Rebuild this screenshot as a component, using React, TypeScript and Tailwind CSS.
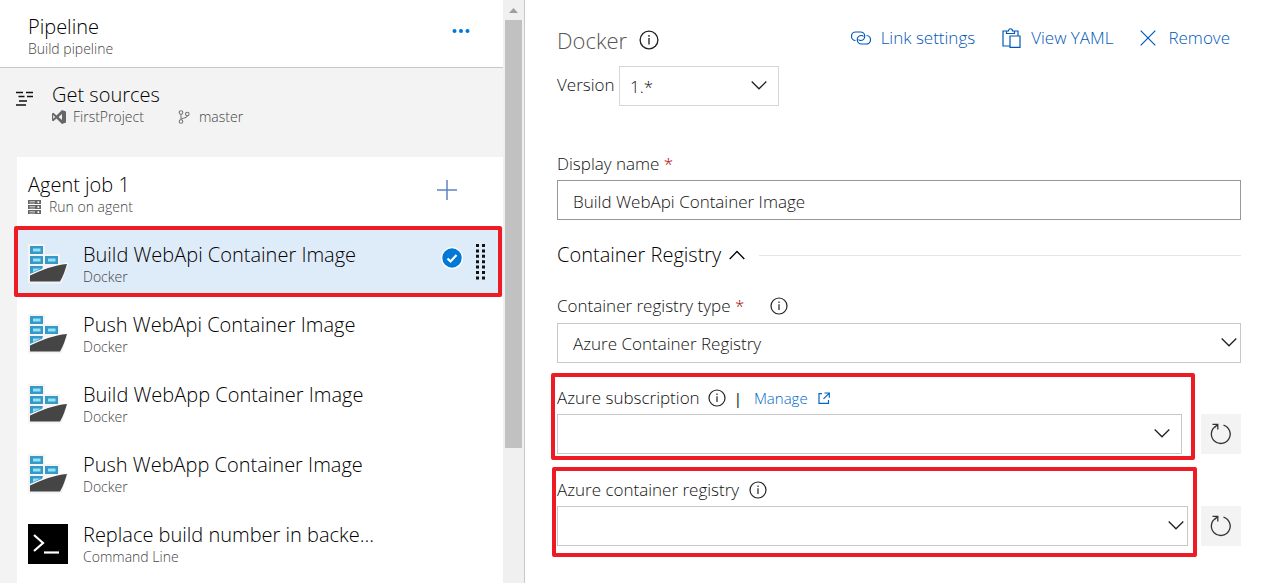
import { useState, type ReactNode } from 'react';

const FONT = "font-['Open_Sans','Noto_Sans',sans-serif] font-light";

function DockerIcon() {
  return (
    <svg viewBox="0 0 40 40" className="size-10 shrink-0" aria-hidden="true">
      <path d="M0 0h17v10h15v10h7.500l-1 5-5 14.500H0z" fill="#f4f4f4" />
      <g fill="#3999c6">
        <path d="M2 2h13v8H2zM2 12h13v8H2zM17 12h13v8H17zM2 22h13l-1 3-12 5z" />
      </g>
      <g fill="#8fe3fb">
        <path d="M5 4.500h7.500v3H5zM5 14.500h7.500v3H5zM20 14.500h7.500v3H20zM5 24.500h8l-8 3.500z" />
      </g>
      <path d="M0 31.500C12 25 26 20 40 18.500v3L2 32z" fill="#fafafa" />
      <path d="M2 31.500C14 26 26 21 39 20c-2 6-3.500 12-7 17.500H2z" fill="#454545" />
    </svg>
  );
}

function CommandIcon() {
  return (
    <svg viewBox="0 0 40 40" className="size-10 shrink-0" aria-hidden="true">
      <path d="M0 0h40v40H0z" fill="#000" />
      <path d="M6 11l9 8-9 8" fill="none" stroke="#fff" strokeWidth="2.2" />
      <path d="M16 28.500h15" stroke="#fff" strokeWidth="2.2" />
    </svg>
  );
}

function Chevron({ className = '', up = false }: { className?: string; up?: boolean }) {
  return (
    <svg viewBox="0 0 16 10" className={`h-[10px] w-4 ${className}`} fill="none" stroke="currentColor" strokeWidth="1.3" aria-hidden="true">
      <path d={up ? 'M.7 9L8 1.500 15.300 9' : 'M.7 1.500L8 8.800 15.300 1.500'} />
    </svg>
  );
}

function Info({ label, large = false }: { label: string; large?: boolean }) {
  return (
    <button type="button" aria-label={label} className="shrink-0 text-[#222]">
      <svg viewBox="0 0 18 18" className={large ? 'size-5' : 'size-[18px]'} fill="none" stroke="currentColor" strokeWidth="1.2" aria-hidden="true">
        <circle cx="9" cy="9" r="8" />
        <path d="M9 7.300V13M9 4.600v1.500" />
      </svg>
    </button>
  );
}

function Highlight({ className }: { className: string }) {
  return <div className={`pointer-events-none absolute rounded-[2px] border-4 border-[#ed1c24] ${className}`} />;
}

function Picker({ id, options, className, chevron }: { id: string; options: string[]; className: string; chevron: string }) {
  return (
    <div className="relative">
      <select id={id} className={`block h-10 w-full appearance-none border bg-white pt-[2px] pr-8 text-[17px] text-[#111] outline-none ${className}`}>
        {options.map((o) => (
          <option key={o}>{o}</option>
        ))}
      </select>
      <Chevron className={`pointer-events-none absolute top-[14px] text-[#222] ${chevron}`} />
    </div>
  );
}

function Refresh({ label }: { label: string }) {
  return (
    <button type="button" aria-label={label} className="flex size-10 shrink-0 items-center justify-center bg-[#f3f3f3] text-[#333]">
      <svg viewBox="0 0 22 22" className="size-[22px]" fill="none" stroke="currentColor" strokeWidth="1.3" aria-hidden="true">
        <path d="M13.500 2.100A9.400 9.400 0 1 1 6 3" />
        <path d="M2.500 1.300h5.300V6.500M7.600 1.500L4.800 4.400" />
      </svg>
    </button>
  );
}

function Action({ icon, children }: { icon: ReactNode; children: ReactNode }) {
  return (
    <button type="button" className="flex items-center whitespace-nowrap text-[17px] leading-7 text-[#0058b8]">
      {icon}
      {children}
    </button>
  );
}

const tasks = [
  { name: 'Build WebApi Container Image', kind: 'Docker' },
  { name: 'Push WebApi Container Image', kind: 'Docker' },
  { name: 'Build WebApp Container Image', kind: 'Docker' },
  { name: 'Push WebApp Container Image', kind: 'Docker' },
  { name: 'Replace build number in backe...', kind: 'Command Line' },
];

function Sidebar() {
  return (
    <aside className="flex w-[525px] shrink-0 border-r border-[#c8c8c8]">
      <div className="flex min-w-0 flex-1 flex-col bg-[#f3f3f3]">
        <header className="flex items-start justify-between border-b border-[#c8c8c8] bg-white pt-[15px] pr-[33px] pb-2 pl-7">
          <div>
            <h1 className="text-[20px] leading-6 text-black">Pipeline</h1>
            <p className="text-[14px] leading-5 text-[#444]">Build pipeline</p>
          </div>
          <button type="button" aria-label="More actions" className="mt-[13px]">
            <svg viewBox="0 0 18 6" className="h-[6px] w-[18px]" fill="#0078d7" aria-hidden="true">
              <circle cx="2.500" cy="3" r="2" />
              <circle cx="9" cy="3" r="2" />
              <circle cx="15.500" cy="3" r="2" />
            </svg>
          </button>
        </header>

        <section className="flex gap-[18px] pt-[15px] pb-[30px] pl-4">
          <svg viewBox="0 0 18 16" className="mt-[7px] h-4 w-[18px] shrink-0" stroke="#111" strokeWidth="1.3" aria-hidden="true">
            <path d="M0 2.500h7M10 2.500h7M2.500 6.500h6M11 6.500h6M3 11h8M0 15h10" />
          </svg>
          <div>
            <h2 className="text-[20px] leading-6 text-black">Get sources</h2>
            <div className="flex text-[14px] leading-5 text-[#444]">
              <span className="flex w-[126px] items-center gap-[7px]">
                <svg viewBox="0 0 14 14" className="size-[14px]" aria-hidden="true">
                  <path fillRule="evenodd" fill="#666" d="M10 0l4 1.500v11L10 14 4.500 8.600 1.300 11.300 0 10.500v-7l1.300-.8 3.200 2.700zM10 4L6.500 7 10 10zM1.200 5v4L3.200 7z" />
                </svg>
                FirstProject
              </span>
              <span className="flex items-center gap-[9px]">
                <svg viewBox="0 0 12 14" className="h-[14px] w-3" fill="none" stroke="#777" strokeWidth="1.1" aria-hidden="true">
                  <circle cx="3" cy="2.500" r="1.800" />
                  <circle cx="3" cy="11.500" r="1.800" />
                  <circle cx="9.300" cy="4" r="1.800" />
                  <path d="M3 4.300v5.400M9.300 5.800c0 2.400-4 1.700-6.300 3.400" />
                </svg>
                master
              </span>
            </div>
          </div>
        </section>

        <section className="ml-[17px] flex-1 bg-white pb-1">
          <div className="flex items-start justify-between pt-4 pr-[46px] pb-[10px] pl-[11px]">
            <div>
              <h2 className="text-[20px] leading-6 text-black">Agent job 1</h2>
              <p className="flex items-center gap-2 text-[14px] leading-5 text-[#444]">
                <svg viewBox="0 0 13 14" className="h-[14px] w-[13px]" aria-hidden="true">
                  <path d="M0 0h13v4H0zM0 5h13v4H0zM0 10h13v4H0z" fill="#666" />
                  <path d="M1.500 1.500H7M1.500 6.500H7M1.500 11.500H7M1.500 3H7M1.500 8H7M1.500 13H7" stroke="#d8d8d8" strokeWidth=".7" />
                  <path d="M9.500 1.300h1.700v1.700H9.500zM9.500 6.300h1.700V8H9.500zM9.500 11.300h1.700V13H9.500z" fill="#fff" />
                </svg>
                Run on agent
              </p>
            </div>
            <button type="button" aria-label="Add a task" className="mt-[7px]">
              <svg viewBox="0 0 20 20" className="size-5" stroke="#5f82c4" strokeWidth="1.500" aria-hidden="true">
                <path d="M10 0v20M0 10h20" />
              </svg>
            </button>
          </div>
          <ul>
            {tasks.map((t, i) => (
              <li key={t.name} className={`relative flex h-[70px] items-center gap-[15px] pt-1 pr-[18px] pl-[11px] ${i === 0 ? 'bg-[#deebf9]' : ''}`}>
                {t.kind === 'Docker' ? <DockerIcon /> : <CommandIcon />}
                <div className="min-w-0 flex-1 pt-px">
                  <h3 className="text-[20px] leading-6 whitespace-nowrap text-black">{t.name}</h3>
                  <p className="text-[14px] leading-5 text-[#444]">{t.kind}</p>
                </div>
                {i === 0 && (
                  <div className="flex items-start gap-[13px] pb-1">
                    <svg viewBox="0 0 22 22" className="mt-[3px] size-[22px]" role="img" aria-label="Selected">
                      <circle cx="11" cy="11" r="11" fill="#fff" />
                      <circle cx="11" cy="11" r="9.700" fill="#0078d7" />
                      <path d="M6.500 11.500l3 3 6-6.500" fill="none" stroke="#fff" strokeWidth="2.200" />
                    </svg>
                    <svg viewBox="0 0 9 36" className="h-9 w-[9px]" stroke="#111" strokeWidth="3" strokeDasharray="3 2.400" aria-hidden="true">
                      <path d="M1.500 0v36M7.500 0v36" />
                    </svg>
                  </div>
                )}
                {i === 0 && <Highlight className="-top-px right-px bottom-0 -left-[3px]" />}
              </li>
            ))}
          </ul>
        </section>
      </div>
      <div className="w-[21px] bg-[#f0f0f0] pr-[2px] pl-[2px]" aria-hidden="true">
        <div className="flex h-5 items-center justify-center">
          <svg viewBox="0 0 9 5" className="h-[5px] w-[9px]" fill="#a0a0a0">
            <path d="M4.500 0L9 5H0z" />
          </svg>
        </div>
        <div className="h-[428px] bg-[#c1c1c1]" />
      </div>
    </aside>
  );
}

function Details() {
  const [name, setName] = useState('Build WebApi Container Image');
  const label = 'text-[17px] leading-6 text-[#111]';
  return (
    <main className="min-w-0 flex-1 bg-white pt-6 pr-[29px] pb-6 pl-8">
      <div className="flex items-start justify-between">
        <div className="flex items-center gap-3">
          <h1 className="text-[22px] leading-8 text-[#555]">Docker</h1>
          <Info label="About Docker" large />
        </div>
        <div className="flex gap-[27px] pr-[11px]">
          <Action
            icon={
              <svg viewBox="0 0 20 14" className="mr-[10px] h-[14px] w-5" fill="none" stroke="currentColor" strokeWidth="1.200" aria-hidden="true">
                <path d="M4.500 9.500A4.200 4.200 0 0 1 5 1h4.500a4.200 4.200 0 0 1 0 8.500 2.500 2.500 0 0 1-2-1" />
                <path d="M15.500 4.500A4.200 4.200 0 0 1 15 13h-4.500a4.200 4.200 0 0 1 0-8.500 2.500 2.500 0 0 1 2 1" />
              </svg>
            }
          >
            Link settings
          </Action>
          <Action
            icon={
              <svg viewBox="0 0 19 20" className="mr-[10px] h-5 w-[19px]" fill="none" stroke="currentColor" strokeWidth="1.200" aria-hidden="true">
                <path d="M7.500 18H1V3h4M12 3h4v4.500M4.500 5.500V3h2C6.500 0 10.500 0 10.500 3h2v2.500zM8 8h10v11.300H8z" />
              </svg>
            }
          >
            View YAML
          </Action>
          <Action
            icon={
              <svg viewBox="0 0 16 16" className="mr-3 size-4" fill="none" stroke="currentColor" strokeWidth="1.200" aria-hidden="true">
                <path d="M.7.7l14.600 14.600M15.300.7L.7 15.300" />
              </svg>
            }
          >
            Remove
          </Action>
        </div>
      </div>

      <div className="mt-[10px] flex">
        <label htmlFor="version" className={`w-[62px] pt-[7px] ${label}`}>Version</label>
        <div className="w-40">
          <Picker id="version" options={['1.*', '0.*']} className="border-[#d6d6d6] pl-[10px]" chevron="right-3" />
        </div>
      </div>

      <label htmlFor="display-name" className={`mt-[46px] block ${label}`}>
        Display name <span className="text-[#a80000]">*</span>
      </label>
      <input
        id="display-name"
        value={name}
        onChange={(e) => setName(e.target.value)}
        className="mt-1 block h-10 w-full border border-[#999] px-[15px] pt-[2px] text-[17px] text-[#111] outline-none"
      />

      <div className="mt-[21px] flex items-center">
        <button type="button" aria-expanded="true" className="flex items-center gap-2 text-[20px] leading-7 text-black">
          Container Registry
          <Chevron up />
        </button>
        <hr className="ml-[14px] flex-1 border-[#e6e6e6]" />
      </div>

      <div className="mt-[25px] flex items-center gap-[26px]">
        <label htmlFor="registry-type" className={label}>
          Container registry type <span className="text-[#a80000]">*</span>
        </label>
        <Info label="About container registry type" />
      </div>
      <div className="mt-[5px]">
        <Picker id="registry-type" options={['Azure Container Registry', 'Container Registry']} className="border-[#c8c8c8] pl-[15px]" chevron="right-1" />
      </div>

      <div className="mt-[23px] flex items-end gap-[19px]">
        <div className="relative min-w-0 flex-1">
          <div className="flex items-center gap-2">
            <label htmlFor="subscription" className={label}>Azure subscription</label>
            <Info label="About Azure subscription" />
            <span className="text-[15px] leading-6 font-normal text-black">|</span>
            <a href="#manage" className="ml-1 flex items-center gap-[10px] text-[15px] leading-6 text-[#0067c5]">
              Manage
              <svg viewBox="0 0 12 12" className="size-3" fill="none" stroke="currentColor" strokeWidth="1.200" aria-hidden="true">
                <path d="M4 1.700H1v9.600h9.500V8M6.500 1h4.800v4.800M11 1.300L5.500 6.800" />
              </svg>
            </a>
          </div>
          <div className="mt-1">
            <Picker id="subscription" options={['']} className="border-[#c8c8c8] pl-[15px]" chevron="right-3" />
          </div>
          <Highlight className="-top-[13px] -right-[13px] -bottom-[6px] -left-[6px]" />
        </div>
        <Refresh label="Refresh Azure subscription" />
      </div>

      <div className="mt-6 flex items-end gap-[13px]">
        <div className="relative min-w-0 flex-1">
          <div className="flex items-center gap-[10px]">
            <label htmlFor="registry" className={label}>Azure container registry</label>
            <Info label="About Azure container registry" />
          </div>
          <div className="mt-1">
            <Picker id="registry" options={['']} className="border-[#c8c8c8] pl-[15px]" chevron="right-1" />
          </div>
          <Highlight className="-top-[11px] -right-[9px] -bottom-[11px] -left-[5px]" />
        </div>
        <Refresh label="Refresh Azure container registry" />
      </div>
    </main>
  );
}

export default function App() {
  return (
    <div className={`flex min-h-screen bg-white ${FONT}`}>
      <Sidebar />
      <Details />
    </div>
  );
}
